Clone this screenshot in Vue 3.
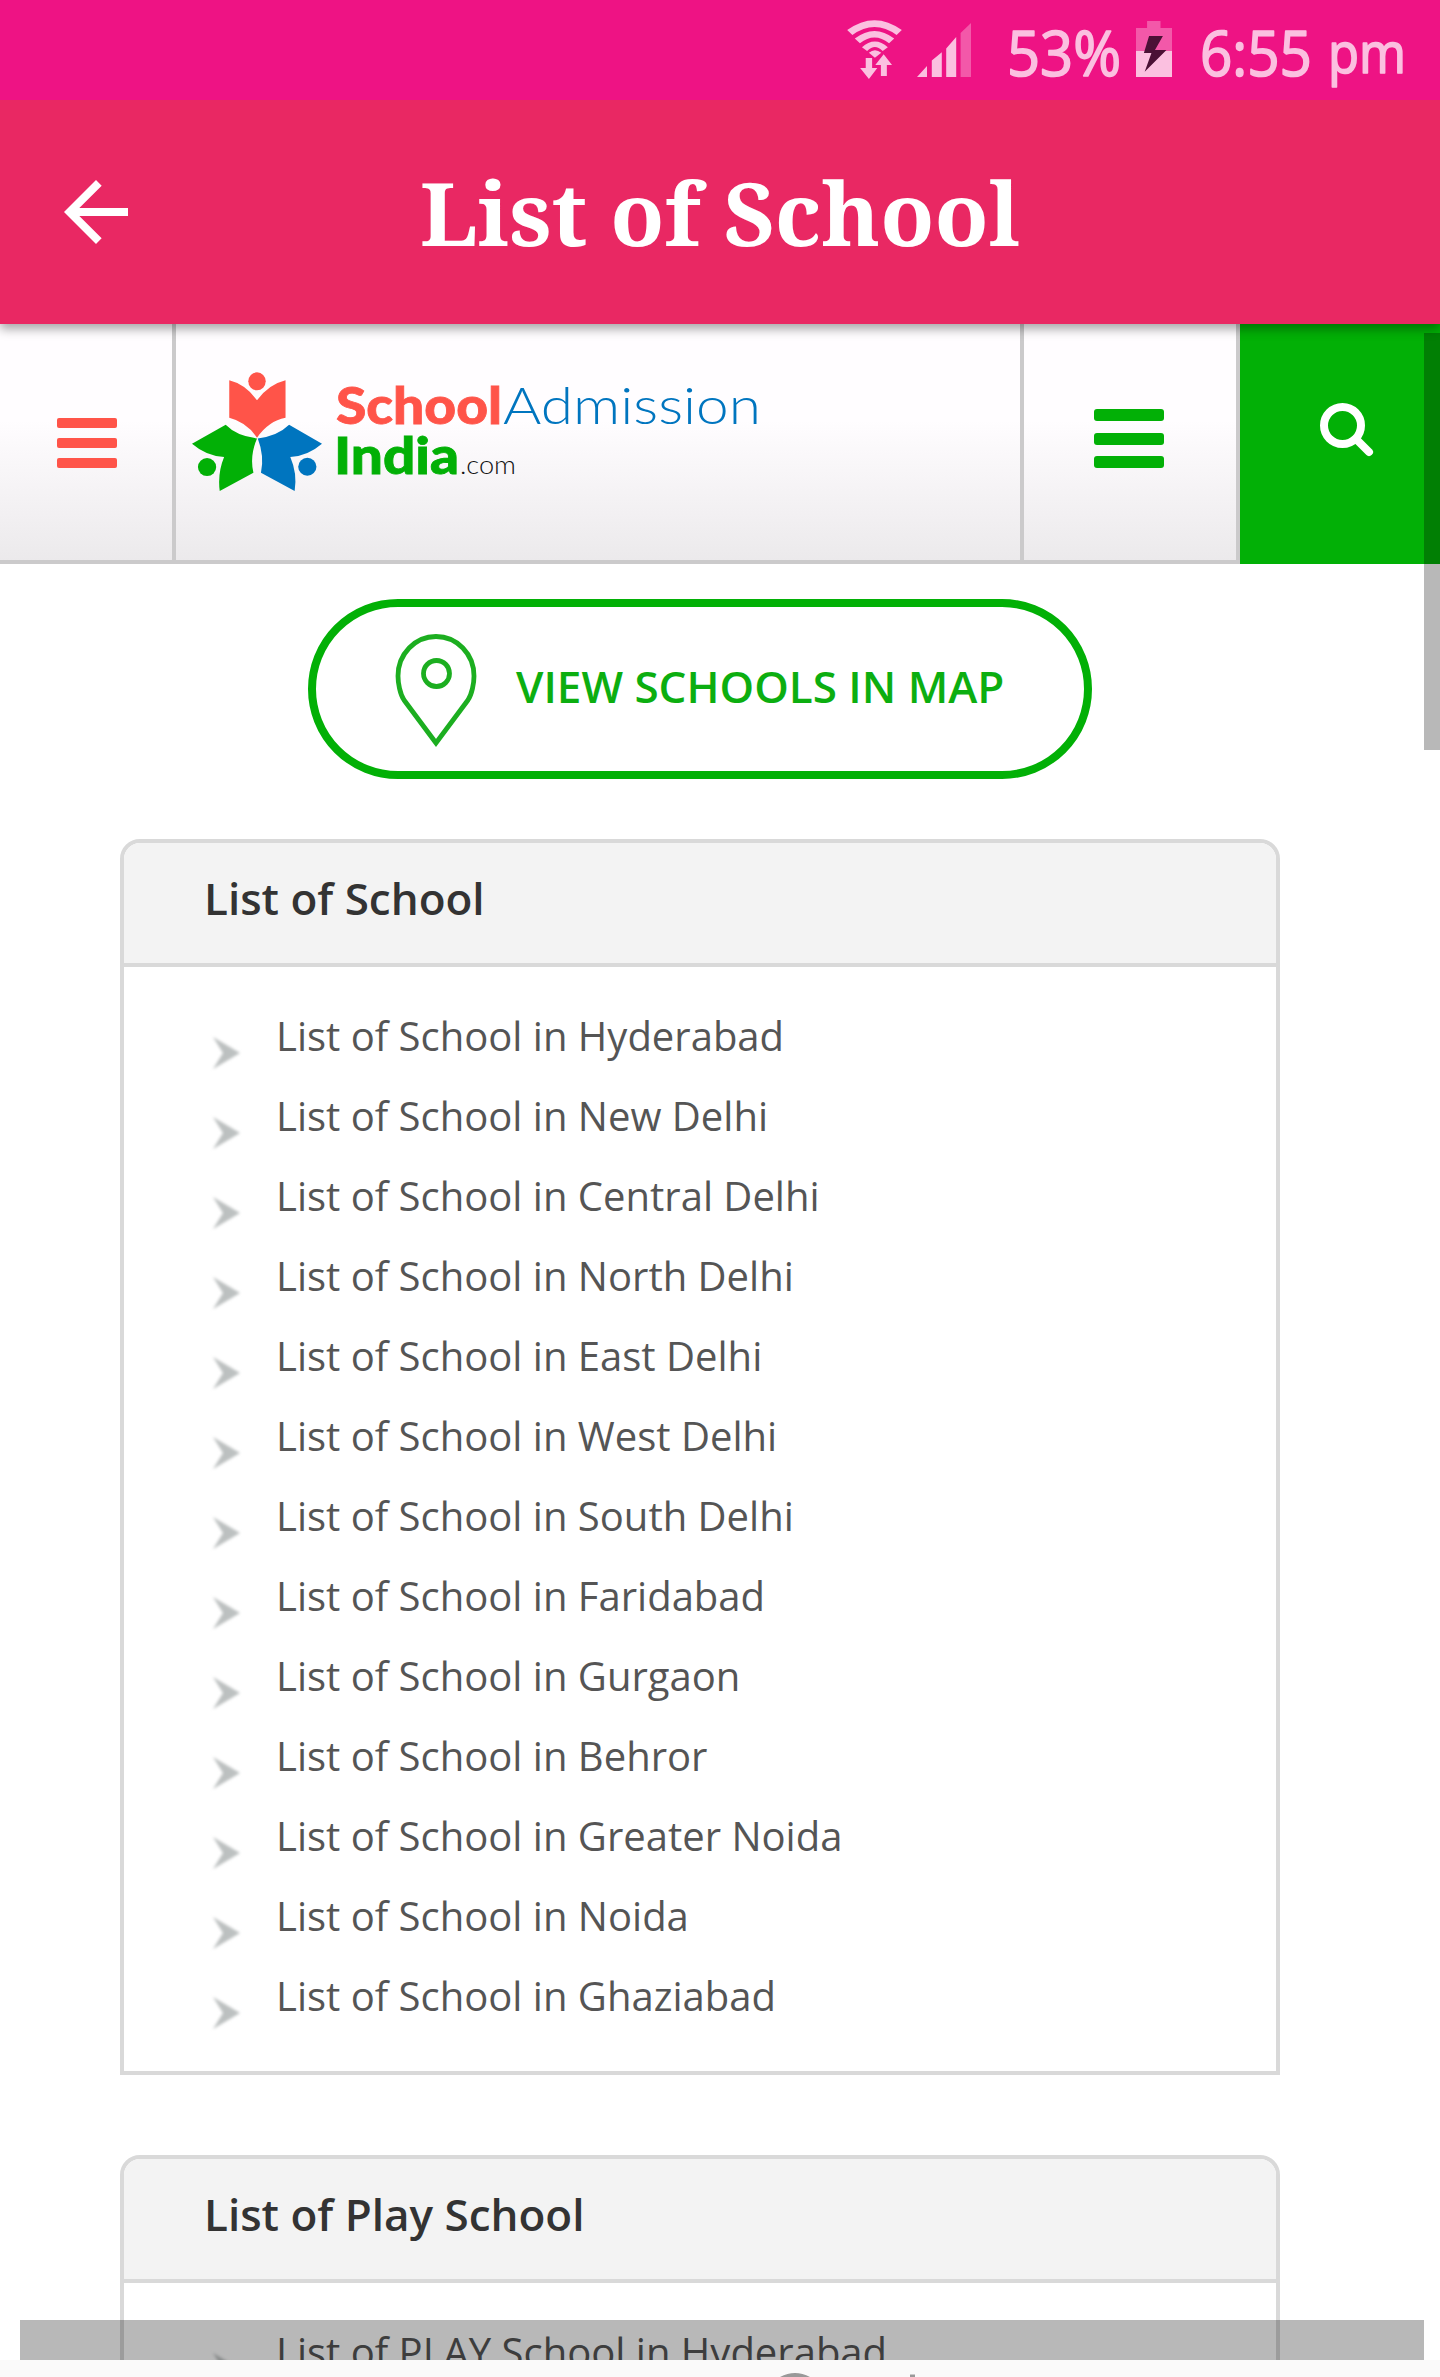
<template>
  <div class="screen">
    <div class="status-bar">
      <svg class="wifi" viewBox="68 59 138 178" preserveAspectRatio="none">
        <g fill="none" stroke="#fbc0e0">
          <path d="M75 97Q137 43 199 97" stroke-width="20" />
          <path d="M94 122Q137 82 180 122" stroke-width="19" />
          <path d="M112 147Q138 117 164 147" stroke-width="17" />
        </g>
        <path d="M123 158Q138 142 154 158L138 173zM115 174H131V204H144L123 237L101 204H115zM153 228V195H139L160 162L181 195H168V228z" />
      </svg>
      <svg class="signal" viewBox="247 70 135 161" preserveAspectRatio="none">
        <path d="M247 231L272 198V231zM284 231V182L309 157V231zM320 231V146L345 112V231z" />
        <path class="faded" d="M356 231V100L382 70V231z" />
      </svg>
      <svg class="percent" viewBox="0 0 110 56">
        <text x="-2" y="49.500" textLength="114" lengthAdjust="spacingAndGlyphs">53%</text>
      </svg>
      <svg class="battery" viewBox="799 63 91 168" preserveAspectRatio="none">
        <path class="faded" d="M827 63H861V84H890V153H799V84H827z" />
        <path d="M799 153H890V231H799z" />
        <path class="bolt" d="M832 108H867L847 150H876L821 215L838 159H819z" />
      </svg>
      <svg class="clock" viewBox="0 0 202 56">
        <text x="-2" y="49.500" textLength="112" lengthAdjust="spacingAndGlyphs">6:55</text>
        <text class="meridiem" x="126" y="47" textLength="78" lengthAdjust="spacingAndGlyphs">pm</text>
      </svg>
    </div>

    <header class="app-bar">
      <svg class="back" viewBox="0 0 24 24">
        <path d="M20 11H7.83l5.59-5.59L12 4l-8 8 8 8 1.41-1.41L7.83 13H20z" />
      </svg>
      <svg class="title" viewBox="0 0 600 90">
        <text x="0" y="79" textLength="600" lengthAdjust="spacingAndGlyphs">List of School</text>
      </svg>
    </header>

    <main class="webview">
      <nav class="nav">
        <div class="nav-menu">
          <span v-for="n in 3" :key="n" class="line"></span>
        </div>
        <div class="nav-logo">
          <svg class="mark" viewBox="82 155 328 358" preserveAspectRatio="none">
            <g fill="#ff5449">
              <ellipse cx="246" cy="183" rx="22" ry="27" />
              <path d="M176 180Q217 192 246 240Q276 192 318 180V293Q275 303 246 353Q220 306 176 293z" />
            </g>
            <g fill="#02b006">
              <ellipse cx="120" cy="441" rx="23" ry="27" />
              <path d="M82 371L167 314Q195 348 246 355Q227 408 237 458L152 513Q146 460 163 411Q118 408 82 371z" />
            </g>
            <g fill="#0075bf">
              <ellipse cx="373" cy="440" rx="23" ry="27" />
              <path d="M410 371L327 314Q298 348 248 355Q265 408 256 458L341 513Q348 460 330 411Q374 408 410 371z" />
            </g>
          </svg>
          <svg class="wordmark" viewBox="0 0 424 110">
            <text class="school" x="0" y="44" textLength="166" lengthAdjust="spacingAndGlyphs">School</text>
            <text class="admission" x="167" y="44" textLength="258" lengthAdjust="spacingAndGlyphs">Admission</text>
            <text class="india" x="-2" y="94" textLength="125" lengthAdjust="spacingAndGlyphs">India</text>
            <text class="com" x="124" y="94" textLength="56" lengthAdjust="spacingAndGlyphs">.com</text>
          </svg>
        </div>
        <div class="nav-list">
          <span v-for="n in 3" :key="n" class="line"></span>
        </div>
        <div class="nav-search">
          <svg viewBox="0 0 54 54">
            <circle cx="22.5" cy="22.5" r="18.5" />
            <path d="M36 36L49 49" />
          </svg>
        </div>
      </nav>

      <a class="map-btn">
        <svg class="pin" viewBox="0 0 80 112">
          <path d="M40 109L8 66C4 60 2 49 2 42C2 20 19 2.500 40 2.500S78 20 78 42C78 49 76 60 72 66z" />
          <circle cx="40.500" cy="39.500" r="13" />
        </svg>
        <span>VIEW SCHOOLS IN MAP</span>
      </a>

      <section v-for="panel in panels" :key="panel.title" class="panel">
        <h2>{{ panel.title }}</h2>
        <ul>
          <li v-for="item in panel.items" :key="item">
            <svg class="arrow" viewBox="0 0 28 34">
              <path d="M0 1L27 17L0 33L10 17z" />
            </svg>
            <span>{{ item }}</span>
          </li>
        </ul>
      </section>

      <div class="scroll-v"></div>
      <div class="scroll-h"></div>
    </main>

    <footer class="bottom">
      <svg viewBox="0 0 136 4">
        <path d="M0 4Q15 -4 30 4zM130 4V1.500H135V4z" />
      </svg>
    </footer>
  </div>
</template>

<script setup>
const cities = [
  'Hyderabad',
  'New Delhi',
  'Central Delhi',
  'North Delhi',
  'East Delhi',
  'West Delhi',
  'South Delhi',
  'Faridabad',
  'Gurgaon',
  'Behror',
  'Greater Noida',
  'Noida',
  'Ghaziabad'
]

const panels = [
  {
    title: 'List of School',
    items: cities.map((city) => `List of School in ${city}`)
  },
  {
    title: 'List of Play School',
    items: ['List of PLAY School in Hyderabad']
  }
]
</script>

<style>
body {
  margin: 0;
  background: #fff;
}
</style>

<style scoped>
.screen {
  width: 1440px;
  height: 2377px;
  overflow: hidden;
  display: flex;
  flex-direction: column;
  font-family: "Open Sans", sans-serif;
}

svg {
  display: block;
  flex: none;
  overflow: visible;
}

.status-bar {
  height: 100px;
  flex: none;
  box-sizing: border-box;
  padding: 20px 36px 0 0;
  display: flex;
  justify-content: flex-end;
  align-items: flex-start;
  background: #ee1384;
  fill: #fbc0e0;
}

.status-bar text {
  font-family: "Open Sans", sans-serif;
  font-size: 62px;
  stroke: #fbc0e0;
  stroke-width: 1.6;
  stroke-linejoin: round;
}

.status-bar .meridiem {
  font-size: 56px;
}

.wifi {
  width: 55px;
  height: 59px;
  margin-right: 15px;
}

.signal {
  width: 54px;
  height: 54px;
  margin: 3px 38px 0 0;
}

.percent {
  width: 110px;
  height: 56px;
  margin: 6px 17px 0 0;
}

.battery {
  width: 36px;
  height: 56px;
  margin: 1px 30px 0 0;
}

.clock {
  width: 202px;
  height: 56px;
  margin-top: 6px;
}

.faded {
  opacity: 0.4;
}

.bolt {
  fill: #4b1136;
}

.app-bar {
  position: relative;
  z-index: 2;
  height: 224px;
  flex: none;
  display: flex;
  align-items: center;
  background: #e92863;
  box-shadow: 0 5px 10px rgba(0, 0, 0, 0.35);
  clip-path: inset(0 0 -30px 0);
  fill: #fff;
}

.back {
  width: 96px;
  height: 96px;
  margin-left: 48px;
}

.title {
  width: 600px;
  height: 90px;
  margin-left: 276px;
}

.title text {
  font-family: "Noto Serif", "DejaVu Serif Condensed", "DejaVu Serif", serif;
  font-size: 88px;
  font-weight: bold;
}

.webview {
  position: relative;
  height: 2036px;
  flex: none;
  overflow: hidden;
  background: #fff;
}

.nav {
  height: 240px;
  display: flex;
  background: linear-gradient(#fffdff 0%, #fffdff 40%, #ebe9eb 100%);
}

.nav > div {
  box-sizing: border-box;
  border-right: 4px solid #cbcacb;
  border-bottom: 4px solid #cbcacb;
}

.nav-menu {
  width: 176px;
  padding: 94px 0 0 57px;
}

.nav-menu .line {
  display: block;
  width: 60px;
  height: 10px;
  margin-bottom: 10px;
  border-radius: 2px;
  background: #ff5449;
}

.nav-logo {
  width: 848px;
  display: flex;
  padding: 48px 0 0 16px;
}

.mark {
  width: 130px;
  height: 119px;
}

.wordmark {
  width: 424px;
  height: 110px;
  margin: 8px 0 0 14px;
  font-family: Lato, sans-serif;
  font-size: 51px;
}

.school {
  fill: #ff5449;
  stroke: #ff5449;
  stroke-width: 0.8;
  font-weight: 900;
}

.admission {
  fill: #0075bf;
  font-weight: 300;
}

.india {
  fill: #02b006;
  stroke: #02b006;
  stroke-width: 0.8;
  font-weight: 900;
}

.com {
  fill: #111;
  font-size: 26px;
  font-weight: 300;
}

.nav-list {
  width: 216px;
  padding: 85px 0 0 70px;
}

.nav-list .line {
  display: block;
  width: 70px;
  height: 12px;
  margin-bottom: 11.500px;
  border-radius: 3px;
  background: #02b006;
}

.nav .nav-search {
  width: 200px;
  padding: 79px 0 0 80px;
  border: none;
  background: #02b006;
}

.nav-search svg {
  width: 54px;
  height: 54px;
  fill: none;
  stroke: #fff;
  stroke-width: 8;
  stroke-linecap: round;
}

.map-btn {
  box-sizing: border-box;
  width: 784px;
  height: 180px;
  margin: 35px 0 0 308px;
  padding: 2px 0 0 80px;
  display: flex;
  align-items: center;
  border: 8px solid #02b006;
  border-radius: 90px;
  color: #0cae10;
  font-size: 44px;
  font-weight: 600;
  white-space: nowrap;
}

.map-btn span {
  margin: -8px 0 0 40px;
}

.pin {
  width: 80px;
  height: 112px;
  fill: none;
  stroke: #1cae20;
  stroke-width: 4.800;
}

.panel {
  box-sizing: border-box;
  width: 1160px;
  margin: 60px 0 80px 120px;
  border: 4px solid #d9d9d9;
  border-radius: 20px 20px 0 0;
}

.panel h2 {
  height: 120px;
  margin: 0;
  padding: 0 0 0 80px;
  border-bottom: 4px solid #d9d9d9;
  border-radius: 16px 16px 0 0;
  background: #f3f3f3;
  color: #333;
  font-size: 44px;
  font-weight: 600;
  line-height: 111px;
}

.panel ul {
  margin: 0;
  padding: 32px 0 32px 89px;
  list-style: none;
}

.panel + .panel {
  margin-top: 0;
}

.panel li {
  height: 80px;
  display: flex;
  color: #555;
  font-size: 40px;
  line-height: 73px;
  white-space: nowrap;
}

.arrow {
  width: 28px;
  height: 34px;
  margin: 37px 35px 0 0;
  fill: #bcc0c0;
  filter: blur(1.400px);
}

.scroll-v {
  position: absolute;
  top: 9px;
  right: 0;
  width: 16px;
  height: 417px;
  background: rgba(0, 0, 0, 0.28);
}

.scroll-h {
  position: absolute;
  left: 20px;
  right: 16px;
  bottom: 0;
  height: 40px;
  background: rgba(0, 0, 0, 0.28);
}

.bottom {
  flex: 1;
  display: flex;
  align-items: flex-end;
  padding-left: 780px;
  background: #fafafa;
}

.bottom svg {
  width: 136px;
  height: 4px;
  fill: #999;
}
</style>
